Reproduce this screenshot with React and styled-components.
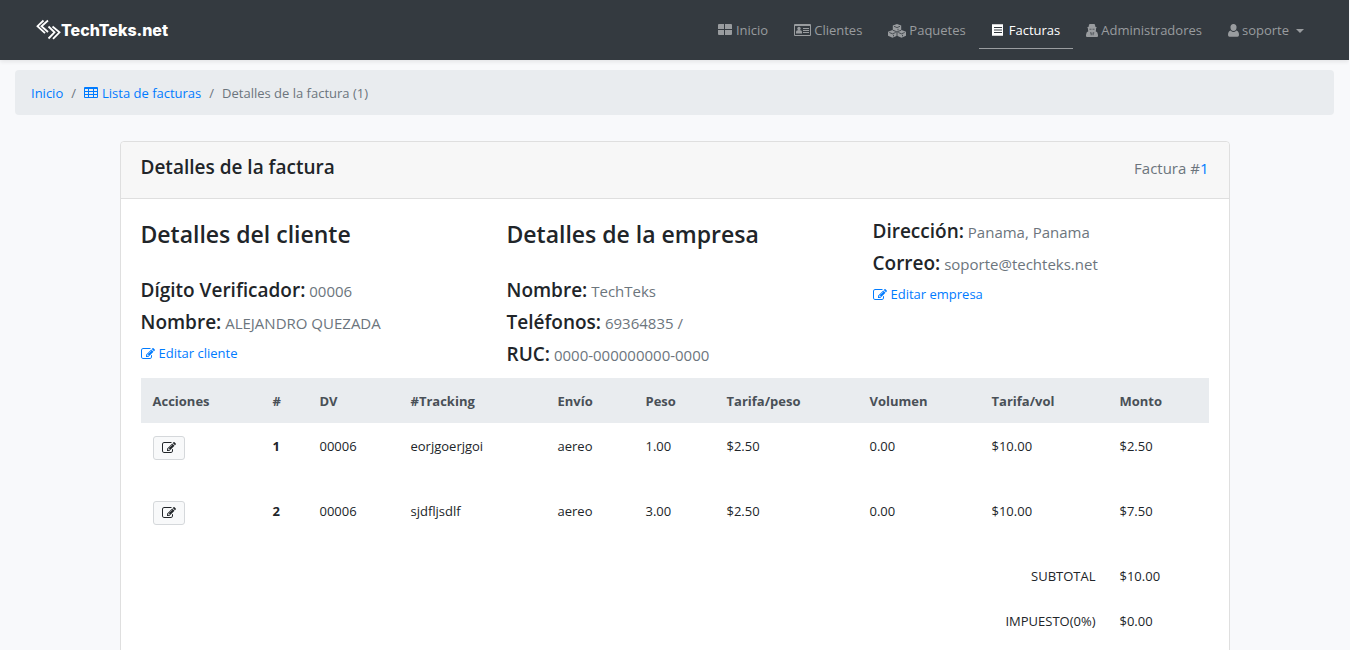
import React from "react";
import styled, { createGlobalStyle } from "styled-components";

const Global = createGlobalStyle`
  *, *::before, *::after { box-sizing: border-box; }
  body {
    margin: 0 1px 0 0;
    background: #f8f9fb;
    color: #212529;
    font-family: "Open Sans", "Noto Sans", sans-serif;
    font-size: 13px;
    line-height: 21px;
  }
  h1, h2, h3, p, ol, ul, dl, dd { margin: 0; padding: 0; }
  a { color: #007bff; text-decoration: none; }
`;

const Navbar = styled.header`
  display: flex;
  align-items: center;
  justify-content: space-between;
  height: 60px;
  padding: 0 32px 0 36px;
  background: #343a40;
  box-shadow: 0 2px 4px rgba(0, 0, 0, 0.08);
`;

const Brand = styled.a`
  display: flex;
  align-items: center;
  color: #fff;
  font-family: Inter, sans-serif;
  font-size: 16px;
  font-weight: 800;
`;

const NavList = styled.ul`
  display: flex;
  list-style: none;
`;

const NavLink = styled.a`
  display: flex;
  align-items: center;
  gap: 3px;
  height: 37px;
  padding: 2px 13px 0;
  border-bottom: 1px solid ${(p) => (p.$active ? "#9a9da0" : "transparent")};
  color: ${(p) => (p.$active ? "#fff" : "#999c9f")};
`;

const Caret = styled.span`
  margin-left: 4px;
  border: 4px solid transparent;
  border-top-color: currentColor;
  border-bottom: 0;
`;

const Crumbs = styled.ol`
  display: flex;
  align-items: center;
  margin: 10px 15px 26px;
  padding: 13px 16px 11px;
  border-radius: 4px;
  background: #e9ecef;
  color: #6c757d;
  list-style: none;
`;

const Crumb = styled.li`
  display: flex;

  & + &::before {
    content: "/";
    padding: 0 8px;
  }
`;

const IconLink = styled.a`
  display: inline-flex;
  align-items: center;
  gap: 4px;
`;

const Card = styled.main`
  max-width: 1110px;
  margin: 0 auto;
  border: 1px solid #dfdfdf;
  border-radius: 4px;
  background: #fff;
`;

const CardHeader = styled.div`
  display: flex;
  justify-content: space-between;
  padding: 12px 20px 16px;
  border-bottom: 1px solid #dfdfdf;
  border-radius: 4px 4px 0 0;
  background: #f7f7f7;
`;

const CardTitle = styled.h1`
  font-size: 19px;
  font-weight: 550;
  line-height: 26px;
`;

const InvoiceNumber = styled.p`
  color: #6c757d;
  font-size: 15px;
  line-height: 28px;
`;

const CardBody = styled.div`
  padding: 21px 20px 20px;
`;

const Columns = styled.div`
  display: grid;
  grid-template-columns: 366px 366px 1fr;
  margin-bottom: 3px;
`;

const ColumnTitle = styled.h2`
  margin-bottom: 31px;
  font-size: 23px;
  font-weight: 550;
  line-height: 28px;
`;

const Detail = styled.p`
  color: #6c757d;
  font-size: 15px;
  line-height: 24px;
  margin-bottom: 8px;

  strong {
    color: #212529;
    font-size: 19px;
    font-weight: 600;
    line-height: 20px;
  }
`;

const Table = styled.table`
  width: 100%;
  border-collapse: collapse;
  table-layout: fixed;
`;

const Head = styled.th`
  padding: 13px 12px 11px;
  background: #e9ecef;
  color: #495057;
  font-weight: 700;
  text-align: left;
`;

const Cell = styled.td`
  height: ${(p) => (p.$total ? 45 : 65)}px;
  padding: 13px 12px 11px;
  text-align: ${(p) => (p.$right ? "right" : "left")};
  vertical-align: top;
  font-weight: ${(p) => (p.$bold ? 700 : 400)};
`;

const EditButton = styled.button`
  display: flex;
  align-items: center;
  justify-content: center;
  width: 32px;
  height: 24px;
  padding: 0;
  border: 1px solid #d5d8db;
  border-radius: 3px;
  background: #f8f9fa;
  color: #212529;
`;

const Svg = styled.svg`
  flex: none;
  fill: currentColor;
`;

const Pencil = () => (
  <Svg width="14" height="14" viewBox="0 0 1792 1792" aria-hidden="true">
    <path d="M888 1184l116-116-152-152-116 116v56h96v96h56zm440-720q-16-16-33 1l-350 350q-17 17-1 33t33-1l350-350q17-17 1-33zm80 594v190q0 119-84.5 203.5t-203.5 84.5h-832q-119 0-203.5-84.5t-84.5-203.5v-832q0-119 84.5-203.5t203.5-84.5h832q63 0 117 25 15 7 18 23 3 17-9 29l-49 49q-14 14-32 8-23-6-45-6h-832q-66 0-113 47t-47 113v832q0 66 47 113t113 47h832q66 0 113-47t47-113v-126q0-13 9-22l64-64q15-15 35-7t20 29zm-96-738l288 288-672 672h-288v-288zm444 132l-92 92-288-288 92-92q28-28 68-28t68 28l152 152q28 28 28 68t-28 68z" />
  </Svg>
);

const Logo = () => (
  <Svg width="25" height="22" viewBox="0 0 25 22" aria-hidden="true">
    <path
      d="M7.500 1.500L1.500 7.200L9 14.200M12 1.500L5.500 7.200L12 13M12.500 7.500L18.500 13.300L12.500 19.500M16.500 7.500L23.500 13.300L17 19.800"
      fill="none"
      stroke="#fff"
      strokeWidth="1.8"
    />
  </Svg>
);

const Tiles = () => (
  <Svg width="15" height="14" viewBox="0 0 15 14" aria-hidden="true">
    <path d="M1 0h5v5H0V1a1 1 0 0 1 1-1zM7 0h6a1 1 0 0 1 1 1v4H7zM0 6h6v5H1a1 1 0 0 1-1-1zM7 6h7v4a1 1 0 0 1-1 1H7z" />
  </Svg>
);

const IdCard = () => (
  <Svg width="17" height="14" viewBox="0 0 17 14" aria-hidden="true">
    <path fillRule="evenodd" d="M1 0h15a1 1 0 0 1 1 1v10a1 1 0 0 1-1 1H1a1 1 0 0 1-1-1V1a1 1 0 0 1 1-1zM1 2v9h15V2z" />
    <circle cx="5" cy="4.500" r="1.700" />
    <path d="M2 9.500V8q0-2 3-2t3 2v1.500zM9 4h6v1H9zM9 6h6v1H9zM9 8h6v1H9z" />
  </Svg>
);

const Cubes = () => (
  <Svg width="18" height="14" viewBox="0 0 18 14" aria-hidden="true">
    <path d="M9 0l4.200 1.500v4.500L9 7.800 4.800 6V1.500zM4.500 6L9 7.800v4l-4.500 2L0 11.800v-4zM13.500 6L18 7.800v4l-4.500 2L9 11.800v-4z" />
    <path d="M6 2.300l3 1.300 3-1.300M1.300 8.500l3.200 1.300 3.200-1.300M10.300 8.500l3.200 1.300 3.200-1.300M9 8v4M4.800 6.200L9 7.900l4.200-1.700M10 6.300V4.800M5.500 12.300v-1.500M14.500 12.300v-1.500" fill="none" stroke="#343a40" strokeWidth="0.8" />
  </Svg>
);

const Bill = () => (
  <Svg width="14" height="14" viewBox="0 0 14 14" aria-hidden="true">
    <path fillRule="evenodd" d="M0 .5l1-.5 1 .5 1-.5 1 .5 1-.5 1 .5 1-.5 1 .5 1-.5 1 .5 1-.5v12l-1-.5-1 .5-1-.5-1 .5-1-.5-1 .5-1-.5-1 .5-1-.5-1 .5-1-.5-1 .5zM2 3v1h8V3zM2 5.500v1h8v-1zM2 8v1h8V8z" />
  </Svg>
);

const Agent = () => (
  <Svg width="12" height="14" viewBox="0 0 12 14" aria-hidden="true">
    <path d="M3 1Q3 0 4 0h4q1 0 1 1l.5 2h1v1.200h-9V3h1z" />
    <path fillRule="evenodd" d="M2 4h8v2.500L9.500 7q2.500 1 2.500 4v1q0 1-1 1H1q-1 0-1-1v-1q0-3 2.500-4L2 6.500zM3.500 4.800v.8h2v-.8zM6.500 4.800v.8h2v-.8zM4 8.500v.8h.8v2h.7V8.500zM6.700 8.500v2.800h.7v-2h.8v-.8z" />
  </Svg>
);

const User = () => (
  <Svg width="11" height="14" viewBox="0 0 11 14" aria-hidden="true">
    <path d="M5.500 0a3 3 0 0 1 3 3.500C8.500 5.500 7.500 7 5.500 7s-3-1.500-3-3.500a3 3 0 0 1 3-3.500zM2.700 6.500Q4 8 5.500 8t2.800-1.500Q11 7 11 11q0 1.800-1.500 1.800h-8Q0 12.800 0 11q0-4 2.700-4.500z" />
  </Svg>
);

const Grid = () => (
  <Svg width="14" height="14" viewBox="0 0 14 14" aria-hidden="true">
    <path fillRule="evenodd" d="M1 0h12a1 1 0 0 1 1 1v9a1 1 0 0 1-1 1H1a1 1 0 0 1-1-1V1a1 1 0 0 1 1-1zM1 2v2h3V2zM5 2v2h4V2zM10 2v2h3V2zM1 5v2h3V5zM5 5v2h4V5zM10 5v2h3V5zM1 8v2h3V8zM5 8v2h4V8zM10 8v2h3V8z" />
  </Svg>
);

const navItems = [
  { label: "Inicio", Icon: Tiles },
  { label: "Clientes", Icon: IdCard },
  { label: "Paquetes", Icon: Cubes },
  { label: "Facturas", Icon: Bill, active: true },
  { label: "Administradores", Icon: Agent },
  { label: "soporte", Icon: User, caret: true },
];

const columns = [
  ["Acciones", 120],
  ["#", 47],
  ["DV", 91],
  ["#Tracking", 147],
  ["Envío", 88],
  ["Peso", 81],
  ["Tarifa/peso", 143],
  ["Volumen", 122],
  ["Tarifa/vol", 128],
  ["Monto", 101],
];
const totalWidth = columns.reduce((sum, c) => sum + c[1], 0);

const Col = styled.col`
  width: ${(p) => (p.$share * 100) / totalWidth}%;
`;

const rows = [
  ["1", "00006", "eorjgoerjgoi", "aereo", "1.00", "$2.50", "0.00", "$10.00", "$2.50"],
  ["2", "00006", "sjdfljsdlf", "aereo", "3.00", "$2.50", "0.00", "$10.00", "$7.50"],
];

const totals = [
  ["SUBTOTAL", "$10.00"],
  ["IMPUESTO(0%)", "$0.00"],
];

export default function App() {
  return (
    <>
      <Global />
      <Navbar>
        <Brand href="#">
          <Logo />
          TechTeks.net
        </Brand>
        <nav>
          <NavList>
            {navItems.map(({ label, Icon, active, caret }) => (
              <li key={label}>
                <NavLink href="#" $active={active}>
                  <Icon />
                  {label}
                  {caret && <Caret />}
                </NavLink>
              </li>
            ))}
          </NavList>
        </nav>
      </Navbar>
      <Crumbs>
        <Crumb><a href="#">Inicio</a></Crumb>
        <Crumb><IconLink href="#"><Grid />Lista de facturas</IconLink></Crumb>
        <Crumb>Detalles de la factura (1)</Crumb>
      </Crumbs>
      <Card>
        <CardHeader>
          <CardTitle>Detalles de la factura</CardTitle>
          <InvoiceNumber>Factura #<a href="#">1</a></InvoiceNumber>
        </CardHeader>
        <CardBody>
          <Columns>
            <div>
              <ColumnTitle>Detalles del cliente</ColumnTitle>
              <Detail><strong>Dígito Verificador:</strong> 00006</Detail>
              <Detail><strong>Nombre:</strong> ALEJANDRO QUEZADA</Detail>
              <IconLink href="#"><Pencil />Editar cliente</IconLink>
            </div>
            <div>
              <ColumnTitle>Detalles de la empresa</ColumnTitle>
              <Detail><strong>Nombre:</strong> TechTeks</Detail>
              <Detail><strong>Teléfonos:</strong> 69364835 /</Detail>
              <Detail><strong>RUC:</strong> 0000-000000000-0000</Detail>
            </div>
            <div>
              <Detail><strong>Dirección:</strong> Panama, Panama</Detail>
              <Detail><strong>Correo:</strong> soporte@techteks.net</Detail>
              <IconLink href="#"><Pencil />Editar empresa</IconLink>
            </div>
          </Columns>
          <Table>
            <colgroup>
              {columns.map(([name, share]) => <Col key={name} $share={share} />)}
            </colgroup>
            <thead>
              <tr>
                {columns.map(([name]) => <Head key={name} scope="col">{name}</Head>)}
              </tr>
            </thead>
            <tbody>
              {rows.map((row) => (
                <tr key={row[0]}>
                  <Cell>
                    <EditButton type="button" aria-label="Editar"><Pencil /></EditButton>
                  </Cell>
                  {row.map((value, i) => <Cell key={i} $bold={i === 0}>{value}</Cell>)}
                </tr>
              ))}
              {totals.map(([label, value]) => (
                <tr key={label}>
                  <Cell colSpan={9} $total $right>{label}</Cell>
                  <Cell $total>{value}</Cell>
                </tr>
              ))}
            </tbody>
          </Table>
        </CardBody>
      </Card>
    </>
  );
}
